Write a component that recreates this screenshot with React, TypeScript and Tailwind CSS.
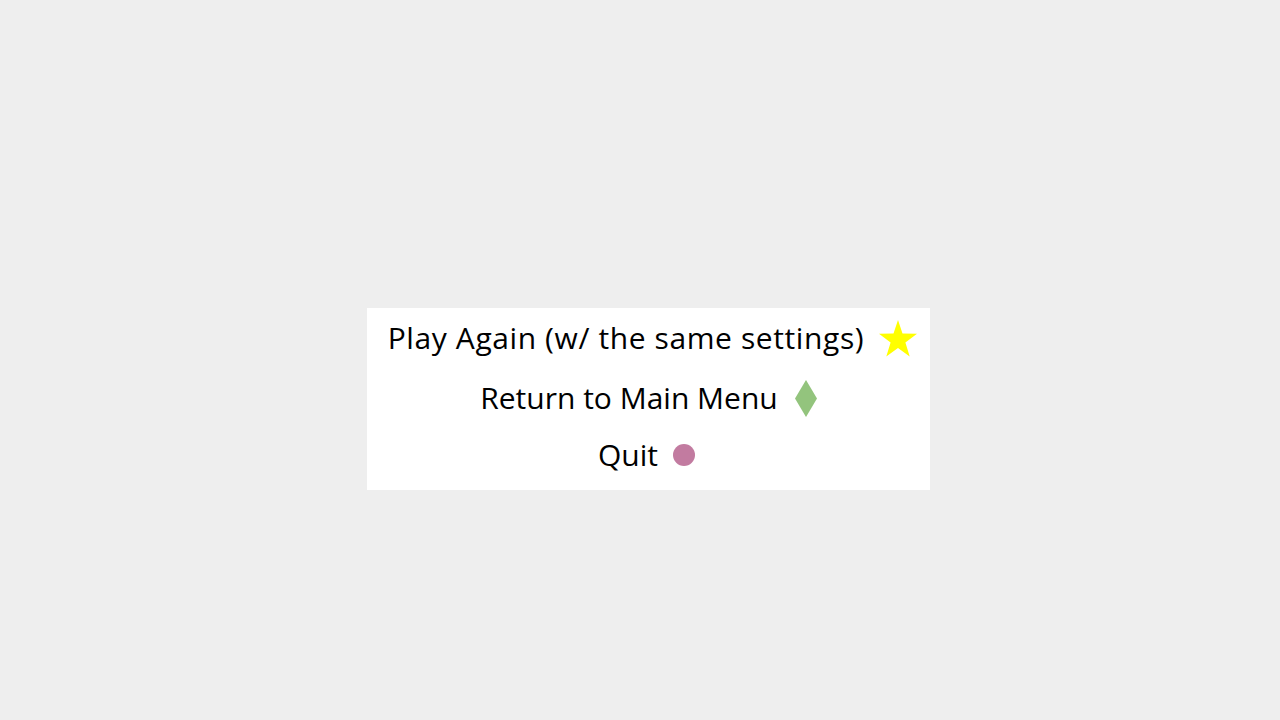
function Star() {
  return (
    <svg width="38" height="37" viewBox="0 0 38 37" className="shrink-0">
      <polygon
        points="19,0 23.5,13.5 38,13.8 26.4,22.4 30.7,36.5 19,28 7.3,36.5 11.6,22.4 0,13.8 14.5,13.5"
        fill="#ffff00"
      />
    </svg>
  );
}

function Diamond() {
  return (
    <svg width="22" height="37" viewBox="0 0 22 37" className="shrink-0">
      <polygon points="11,0 22,18.5 11,37 0,18.5" fill="#93c47d" />
    </svg>
  );
}

function Dot() {
  return <div className="w-[22px] h-[22px] rounded-full bg-[#c27ba0] shrink-0" />;
}

export default function App() {
  return (
    <div className="w-full h-[720px] bg-[#eeeeee] flex justify-center pt-[308px] pl-[17px] font-['Open_Sans',sans-serif]">
      <div className="bg-white w-[563px] h-[182px] flex flex-col items-center text-black text-[30px] leading-[1.2]">
        <button className="flex items-center gap-[15px] h-[60px] pl-[8px]">
          <span className="tracking-[0.6px]">Play Again (w/ the same settings)</span>
          <Star />
        </button>
        <button className="flex items-center gap-[17px] h-[60px]">
          <span>Return to Main Menu</span>
          <Diamond />
        </button>
        <button className="flex items-center gap-[15px] h-[54px] pr-[4px]">
          <span>Quit</span>
          <Dot />
        </button>
      </div>
    </div>
  );
}
